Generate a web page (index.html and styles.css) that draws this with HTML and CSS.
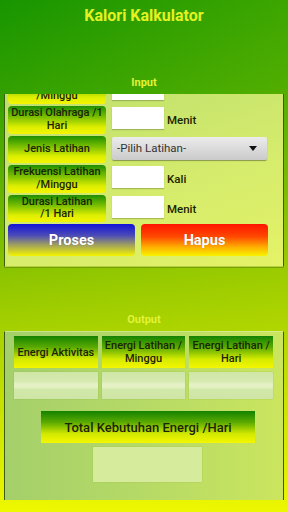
FILE: index.html
```html
<!DOCTYPE html>
<html lang="id">
<head>
  <meta charset="UTF-8">
  <title>Kalori Kalkulator</title>
  <meta name="viewport" content="width=device-width, initial-scale=1.0">
  <link rel="stylesheet" href="styles.css">
</head>
<body>
  <div class="screen">
    <div class="title">Kalori Kalkulator</div>

    <div class="section-label">Input</div>
    <div class="panel input-panel">
      <div class="form">
        <div class="row">
          <div class="tag">Frekuensi Olahraga<br>/Minggu</div>
          <input class="field" type="text">
        </div>
        <div class="row">
          <div class="tag">Durasi Olahraga /1<br>Hari</div>
          <input class="field" type="text">
          <span class="unit">Menit</span>
        </div>
        <div class="row">
          <div class="tag">Jenis Latihan</div>
          <div class="select">
            <span>-Pilih Latihan-</span>
            <span class="caret"></span>
          </div>
        </div>
        <div class="row">
          <div class="tag">Frekuensi Latihan<br>/Minggu</div>
          <input class="field" type="text">
          <span class="unit">Kali</span>
        </div>
        <div class="row">
          <div class="tag">Durasi Latihan<br>/1 Hari</div>
          <input class="field" type="text">
          <span class="unit">Menit</span>
        </div>
        <div class="actions">
          <button class="btn btn-blue">Proses</button>
          <button class="btn btn-red">Hapus</button>
        </div>
      </div>
    </div>

    <div class="section-label">Output</div>
    <div class="panel output-panel">
      <div class="out-grid">
        <div class="out-head">Energi Aktivitas</div>
        <div class="out-head">Energi Latihan /<br>Minggu</div>
        <div class="out-head">Energi Latihan /<br>Hari</div>
        <div class="out-value"></div>
        <div class="out-value"></div>
        <div class="out-value"></div>
      </div>
      <div class="total-head">Total Kebutuhan Energi /Hari</div>
      <div class="total-value"></div>
    </div>
  </div>
</body>
</html>
```

FILE: styles.css
```css
* { box-sizing: border-box; }

body {
  margin: 0;
  font-family: Roboto, 'Liberation Sans', sans-serif;
  color: #1c2400;
}

.screen {
  width: 288px;
  height: 512px;
  overflow: hidden;
  background:
    linear-gradient(to right, rgba(0, 0, 0, 0), rgba(230, 240, 0, 0.18)),
    linear-gradient(to bottom, #179500 0%, #32a000 18%, #6cb600 40%, #9ccc00 60%, #c4e000 78%, #eef800 100%);
}

.title {
  height: 30px;
  line-height: 32px;
  text-align: center;
  font-size: 16px;
  font-weight: bold;
  color: #e4f222;
}

.section-label {
  margin-top: 46px;
  height: 14px;
  line-height: 14px;
  text-align: center;
  font-size: 11px;
  font-weight: bold;
  color: #e2f238;
}

.panel {
  margin: 4px 4px 0;
  border-left: 1px solid #3c5c10;
  border-right: 1px solid #3c5c10;
}

/* input card, scrolled a little so the first row is cut off */
.input-panel {
  height: 173px;
  overflow: hidden;
  padding: 0 3px 10px;
  background: linear-gradient(160deg, #bedf6e 0%, #d6ec6c 60%, #e4f266 100%);
  border-bottom: 1px solid #b8d040;
  box-shadow: 0 1px 0 rgba(60, 90, 0, 0.35);
}

.form {
  margin-top: -17.5px;
}

.row {
  display: flex;
  align-items: flex-start;
  height: 27.5px;
  margin-bottom: 2px;
}

.tag {
  width: 98px;
  height: 27.5px;
  flex: none;
  display: flex;
  align-items: center;
  justify-content: center;
  text-align: center;
  font-size: 11px;
  font-weight: 500;
  line-height: 12.5px;
  border-radius: 4px;
  background: linear-gradient(to bottom, #1f8e00 0%, #7cc000 40%, #dcee00 75%, #f6f600 100%);
}

.field {
  width: 52px;
  height: 22px;
  margin: 1px 0 0 6px;
  padding: 0;
  border: none;
  background: #fff;
  box-shadow: 0 1px 1px rgba(80, 100, 40, 0.35);
  outline: none;
}

.unit {
  margin-left: 3px;
  line-height: 29px;
  font-size: 11.5px;
  font-weight: 500;
}

.select {
  width: 155px;
  height: 23px;
  margin: 1px 0 0 6px;
  padding: 0 10px 0 5px;
  display: flex;
  align-items: center;
  justify-content: space-between;
  font-size: 11.5px;
  color: #333;
  border-radius: 2px;
  background: linear-gradient(to bottom, #ececec, #cacaca);
  box-shadow: 0 1px 1px rgba(60, 70, 40, 0.5);
}

.caret {
  width: 0;
  height: 0;
  border-left: 4px solid transparent;
  border-right: 4px solid transparent;
  border-top: 5px solid #111;
}

.actions {
  display: flex;
  gap: 6px;
}

.btn {
  width: 127px;
  height: 32px;
  border: none;
  border-radius: 4px;
  font-family: Roboto, 'Liberation Sans', sans-serif;
  font-size: 14.5px;
  font-weight: bold;
  color: #fff;
  text-shadow: 0 0 1px rgba(0, 0, 0, 0.3);
  cursor: pointer;
}

.btn-blue {
  background: linear-gradient(to bottom, #1414d8 0%, #4a4ab8 35%, #a0a060 65%, #f4f400 100%);
}

.btn-red {
  background: linear-gradient(to bottom, #ff1400 0%, #ff4a00 40%, #ffa800 70%, #f8f400 100%);
}

/* output card */
.output-panel {
  height: 169px;
  padding: 4px 10px 17px 9px;
  border-top: 1px solid rgba(220, 240, 160, 0.6);
  background: linear-gradient(to right, #a4cf6a 0%, #b6da66 50%, #cbe55e 100%);
}

.out-grid {
  display: grid;
  grid-template-columns: repeat(3, 1fr);
  column-gap: 4px;
  row-gap: 4px;
}

.out-head {
  height: 32px;
  display: flex;
  align-items: center;
  justify-content: center;
  text-align: center;
  font-size: 11px;
  font-weight: 500;
  line-height: 13px;
  background: linear-gradient(to bottom, #138200 0%, #5aaa00 35%, #d4ea00 72%, #f4f600 100%);
}

.out-value {
  height: 27px;
  background: linear-gradient(to bottom, #cfe6a6 0%, #d6eab0 35%, #e6f2c6 45%, #e2f0c0 58%, #d2e8aa 65%, #cfe5a6 100%);
  box-shadow: 0 0 1px rgba(120, 160, 60, 0.6);
}

.total-head {
  width: 214px;
  height: 32px;
  margin: 12px 0 0 27px;
  display: flex;
  align-items: center;
  justify-content: center;
  font-size: 13px;
  font-weight: 500;
  background: linear-gradient(to bottom, #138200 0%, #5aaa00 35%, #d4ea00 72%, #f4f600 100%);
}

.total-value {
  width: 109px;
  height: 35px;
  margin: 4px 0 0 79px;
  background: #d6eb9c;
  box-shadow: 0 0 1px rgba(120, 160, 60, 0.6);
}
```
